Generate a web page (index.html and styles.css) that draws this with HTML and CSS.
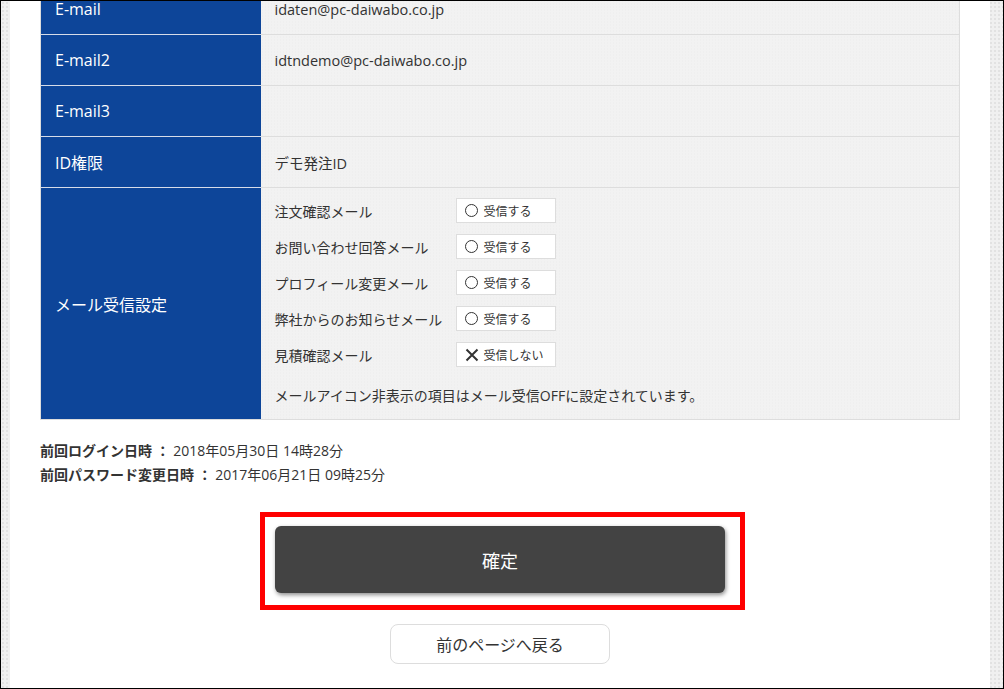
FILE: index.html
```html
<!DOCTYPE html>
<html lang="ja">
    <head>
        <meta charset="UTF-8">
        <title>ユーザー情報確認</title>
        <link rel="stylesheet" href="styles.css">
    </head>
    <body>
        <div class="frame">
            <div class="page">
                <!-- User info table (scrolled view) -->
                <table class="info-table">
                    <tr>
                        <th>E-mail</th>
                        <td>idaten@pc-daiwabo.co.jp</td>
                    </tr>
                    <tr>
                        <th>E-mail2</th>
                        <td>idtndemo@pc-daiwabo.co.jp</td>
                    </tr>
                    <tr>
                        <th>E-mail3</th>
                        <td></td>
                    </tr>
                    <tr>
                        <th>ID権限</th>
                        <td>デモ発注ID</td>
                    </tr>
                    <tr>
                        <th>メール受信設定</th>
                        <td class="mail-cell">
                            <div class="mail-row">
                                <span class="mail-label">注文確認メール</span>
                                <span class="mail-state"><i class="ico-on"></i>受信する</span>
                            </div>
                            <div class="mail-row">
                                <span class="mail-label">お問い合わせ回答メール</span>
                                <span class="mail-state"><i class="ico-on"></i>受信する</span>
                            </div>
                            <div class="mail-row">
                                <span class="mail-label">プロフィール変更メール</span>
                                <span class="mail-state"><i class="ico-on"></i>受信する</span>
                            </div>
                            <div class="mail-row">
                                <span class="mail-label">弊社からのお知らせメール</span>
                                <span class="mail-state"><i class="ico-on"></i>受信する</span>
                            </div>
                            <div class="mail-row">
                                <span class="mail-label">見積確認メール</span>
                                <span class="mail-state">
                                    <svg class="ico-off" width="14" height="14" viewBox="0 0 14 14"><path d="M1.5 1.5 L12.5 12.5 M12.5 1.5 L1.5 12.5" stroke="#333" stroke-width="2" fill="none"/></svg>受信しない
                                </span>
                            </div>
                            <p class="mail-note">メールアイコン非表示の項目はメール受信OFFに設定されています。</p>
                        </td>
                    </tr>
                </table>

                <!-- Last login -->
                <div class="history">
                    <p><b>前回ログイン日時 ：</b> 2018年05月30日 14時28分</p>
                    <p><b>前回パスワード変更日時 ：</b> 2017年06月21日 09時25分</p>
                </div>

                <div class="actions">
                    <div class="highlight">
                        <button class="btn-submit">確定</button>
                    </div>
                    <button class="btn-back">前のページへ戻る</button>
                </div>
            </div>
        </div>
    </body>
</html>
```

FILE: styles.css
```css
body {
    margin: 0;
    font-family: "Open Sans", "Noto Sans CJK JP", sans-serif;
    color: #333;
}
.frame {
    width: 1004px;
    height: 689px;
    box-sizing: border-box;
    border: 1px solid #000;
    overflow: hidden;
    background-color: #f0f0f0;
    background-image: radial-gradient(#e2e2e2 1px, transparent 1px);
    background-size: 4px 4px;
}
.page {
    width: 980px;
    height: 100%;
    margin-left: 9px;
    padding: 0 30px;
    box-sizing: border-box;
    background: #fff;
    overflow: hidden;
}
.info-table {
    width: 920px;
    margin-top: -18px;
    border-collapse: collapse;
    border: 1px solid #ddd;
}
.info-table th,
.info-table td {
    height: 51px;
    padding: 0 14px;
    border-top: 1px solid #ddd;
    box-sizing: border-box;
    text-align: left;
    vertical-align: middle;
}
.info-table th {
    width: 220px;
    background: #0d4599;
    color: #fff;
    font-size: 16px;
    font-weight: normal;
    border-top-color: #d6dce8;
}
.info-table td {
    background-color: #f2f2f2;
    background-image: radial-gradient(#ececec 1px, transparent 1px);
    background-size: 3px 3px;
    font-size: 14.5px;
}
.info-table td.mail-cell {
    padding-top: 10px;
    padding-bottom: 14px;
    font-size: 14px;
}
.mail-row {
    display: flex;
    align-items: center;
    height: 25px;
    margin-bottom: 11px;
}
.mail-label {
    width: 181px;
    font-size: 14px;
}
.mail-state {
    display: flex;
    align-items: center;
    width: 100px;
    height: 25px;
    box-sizing: border-box;
    padding-left: 8px;
    background: #fff;
    border: 1px solid #ddd;
    font-size: 12px;
}
.ico-on {
    width: 13px;
    height: 13px;
    margin-right: 6px;
    box-sizing: border-box;
    border: 1.5px solid #333;
    border-radius: 50%;
}
.ico-off {
    margin-right: 5px;
}
.mail-note {
    margin: 18px 0 0;
    font-size: 14px;
}
.history {
    margin-top: 19px;
    font-size: 14px;
}
.history p {
    margin: 0;
    line-height: 24px;
}
.actions {
    display: flex;
    flex-direction: column;
    align-items: center;
    margin-top: 25px;
}
.highlight {
    padding: 9px 15px 12px 10px;
    margin-left: 5px;
    border: 5px solid #f00;
}
.btn-submit {
    display: block;
    width: 450px;
    height: 67px;
    border: none;
    border-radius: 6px;
    background: #434343;
    color: #fff;
    font-family: inherit;
    font-size: 18px;
    box-shadow: 1px 2px 4px rgba(0, 0, 0, 0.45);
}
.btn-back {
    width: 220px;
    height: 40px;
    margin-top: 14px;
    border: 1px solid #ddd;
    border-radius: 8px;
    background: #fff;
    color: #333;
    font-family: inherit;
    font-size: 16px;
}
```
